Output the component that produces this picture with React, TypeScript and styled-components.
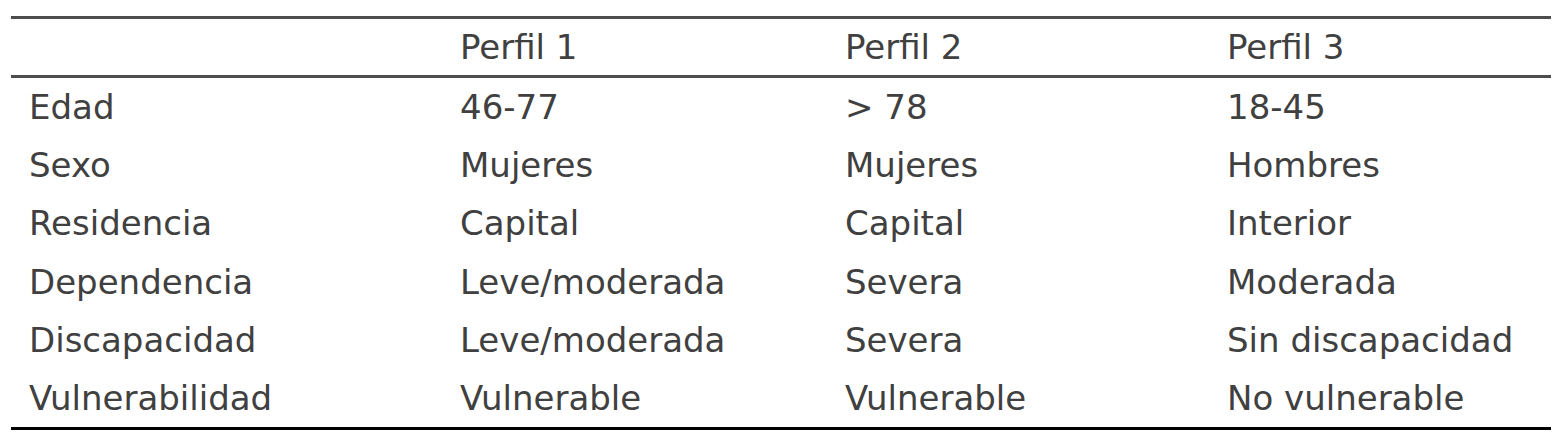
import React from "react";
import styled, { createGlobalStyle } from "styled-components";

const GlobalStyle = createGlobalStyle`
  body {
    margin: 0;
    background: #ffffff;
    font-family: "DejaVu Sans", Verdana, sans-serif;
  }
`;

const Page = styled.div`
  padding: 16px 17px 0 11px;
`;

const Table = styled.div`
  display: grid;
  grid-template-columns: 431px 385px 382px 342px;
  width: 1540px;
  border-top: 3px solid #4d4d4d;
  border-bottom: 3px solid #000000;
`;

const Cell = styled.div<{ $head?: boolean }>`
  display: flex;
  align-items: center;
  height: ${(p) => (p.$head ? "56px" : "58.2px")};
  padding-left: 18px;
  font-size: 34px;
  color: #404040;
  white-space: nowrap;
  border-bottom: ${(p) => (p.$head ? "3px solid #4d4d4d" : "none")};
`;

const head = ["", "Perfil 1", "Perfil 2", "Perfil 3"];

const rows = [
  ["Edad", "46-77", "> 78", "18-45"],
  ["Sexo", "Mujeres", "Mujeres", "Hombres"],
  ["Residencia", "Capital", "Capital", "Interior"],
  ["Dependencia", "Leve/moderada", "Severa", "Moderada"],
  ["Discapacidad", "Leve/moderada", "Severa", "Sin discapacidad"],
  ["Vulnerabilidad", "Vulnerable", "Vulnerable", "No vulnerable"],
];

function App() {
  return (
    <Page>
      <GlobalStyle />
      <Table>
        {head.map((h, i) => (
          <Cell key={"h" + i} $head>
            {h}
          </Cell>
        ))}
        {rows.map((r, ri) =>
          r.map((c, ci) => <Cell key={ri + "-" + ci}>{c}</Cell>)
        )}
      </Table>
    </Page>
  );
}

export default App;
